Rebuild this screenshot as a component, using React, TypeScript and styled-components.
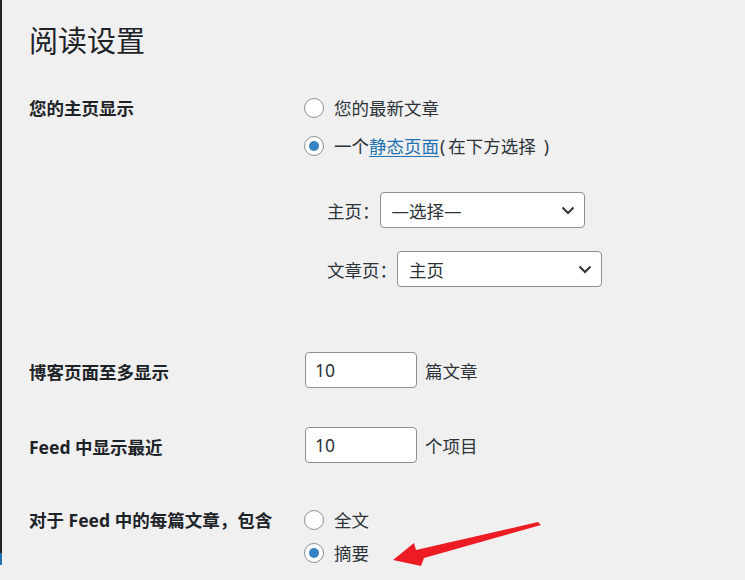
import React from 'react'
import styled, { createGlobalStyle } from 'styled-components'

const GlobalStyle = createGlobalStyle`
  html, body {
    margin: 0;
    padding: 0;
    background: #f0f0f1;
  }
  body {
    font-family: "Noto Sans", "Noto Sans CJK SC", sans-serif;
    color: #2c3338;
  }
`

const Page = styled.div`
  position: relative;
  display: flex;
  min-height: 580px;
  overflow: hidden;
`

const EdgeBar = styled.div`
  width: 2px;
  display: flex;
  flex-direction: column;
`

const EdgePart = styled.div<{ $h: number; $color: string }>`
  height: ${p => p.$h}px;
  background: ${p => p.$color};
`

const Main = styled.main`
  flex: 1;
  padding: 22px 0 0 27px;
`

const Title = styled.h1`
  margin: 0;
  font-size: 29px;
  font-weight: 400;
  line-height: 38px;
  color: #1d2327;
`

const Row = styled.div<{ $top: number }>`
  display: grid;
  grid-template-columns: 275px 1fr;
  margin-top: ${p => p.$top}px;
`

const Label = styled.div<{ $pad?: number }>`
  padding-top: ${p => p.$pad || 0}px;
  font-size: 17.5px;
  line-height: 24px;
  font-weight: 700;
  color: #1d2327;
`

const Options = styled.div<{ $gap: number }>`
  display: flex;
  flex-direction: column;
  gap: ${p => p.$gap}px;
`

const Option = styled.label`
  display: flex;
  align-items: center;
  gap: 10px;
  font-size: 17.5px;
  line-height: 24px;
  color: #2c3338;
`

const Radio = styled.span<{ $checked?: boolean }>`
  width: 20px;
  height: 20px;
  box-sizing: border-box;
  border: 1px solid #8c8f94;
  border-radius: 50%;
  background: #fff;
  display: flex;
  align-items: center;
  justify-content: center;
  &::after {
    content: '';
    width: 10px;
    height: 10px;
    border-radius: 50%;
    background: ${p => (p.$checked ? '#3582c4' : 'transparent')};
  }
`

const Link = styled.a`
  color: #2271b1;
  text-decoration: underline;
  text-underline-offset: 3px;
`

const Paren = styled.span<{ $side: 'open' | 'close' }>`
  margin: ${p => (p.$side === 'open' ? '0 3px 0 1px' : '0 0 0 8px')};
`

const SubFields = styled.div`
  margin-top: 34px;
  padding-left: 23px;
  display: flex;
  flex-direction: column;
  gap: 23px;
`

const SelectRow = styled.div`
  display: flex;
  align-items: center;
  font-size: 17.5px;
  color: #2c3338;
`

const SelectBox = styled.div`
  width: 205px;
  height: 36px;
  box-sizing: border-box;
  border: 1px solid #8c8f94;
  border-radius: 4px;
  background: #fff;
  display: flex;
  align-items: center;
  justify-content: space-between;
  padding: 0 9px 0 11px;
  font-size: 17.5px;
  color: #2c3338;
`

const Field = styled.div`
  display: flex;
  align-items: center;
  gap: 8px;
  font-size: 17.5px;
  color: #2c3338;
`

const NumberBox = styled.div`
  width: 112px;
  height: 36px;
  margin-left: 1px;
  box-sizing: border-box;
  border: 1px solid #8c8f94;
  border-radius: 4px;
  background: #fff;
  display: flex;
  align-items: center;
  padding-left: 9px;
  font-size: 17.5px;
  color: #2c3338;
`

const Overlay = styled.svg`
  position: absolute;
  left: 0;
  top: 0;
  pointer-events: none;
`

const Chevron = () => (
  <svg width="14" height="9" viewBox="0 0 14 9">
    <path d="M1.5 1.5 L7 7 L12.5 1.5" fill="none" stroke="#2c3338" strokeWidth="2" />
  </svg>
)

export default function App() {
  return (
    <Page>
      <GlobalStyle />
      <EdgeBar>
        <EdgePart $h={553} $color="#1d2327" />
        <EdgePart $h={12} $color="#2271b1" />
      </EdgeBar>
      <Main>
        <Title>阅读设置</Title>

        <Row $top={36}>
          <Label>您的主页显示</Label>
          <div>
            <Options $gap={14}>
              <Option><Radio />您的最新文章</Option>
              <Option>
                <Radio $checked />
                <span>
                  一个<Link>静态页面</Link>
                  <Paren $side="open">(</Paren>在下方选择<Paren $side="close">)</Paren>
                </span>
              </Option>
            </Options>
            <SubFields>
              <SelectRow>
                主页：
                <SelectBox>—选择—<Chevron /></SelectBox>
              </SelectRow>
              <SelectRow>
                文章页：
                <SelectBox>主页<Chevron /></SelectBox>
              </SelectRow>
            </SubFields>
          </div>
        </Row>

        <Row $top={65}>
          <Label $pad={8}>博客页面至多显示</Label>
          <Field>
            <NumberBox>10</NumberBox>
            篇文章
          </Field>
        </Row>

        <Row $top={39}>
          <Label $pad={8}>Feed 中显示最近</Label>
          <Field>
            <NumberBox>10</NumberBox>
            个项目
          </Field>
        </Row>

        <Row $top={45}>
          <Label>对于 Feed 中的每篇文章，包含</Label>
          <Options $gap={9}>
            <Option><Radio />全文</Option>
            <Option><Radio $checked />摘要</Option>
          </Options>
        </Row>
      </Main>

      <Overlay width="745" height="580" viewBox="0 0 745 580">
        <polygon
          points="538,522 541,525 424,558 421,566 393,560 414,543 416,550"
          fill="#ed1c24"
        />
      </Overlay>
    </Page>
  )
}
